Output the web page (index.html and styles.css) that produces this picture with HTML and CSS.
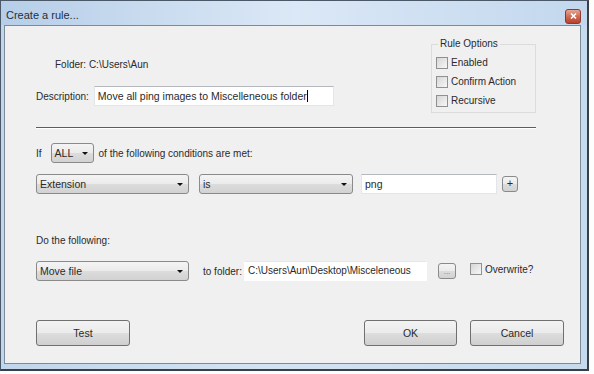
FILE: index.html
```html
<!DOCTYPE html>
<html>
<head>
    <title>Create a rule...</title>
    <link rel="stylesheet" href="styles.css">
</head>
<body>
    <div class="window">
        <div class="titlebar">
            <span class="title">Create a rule...</span>
            <span class="close-btn">
                <svg width="7" height="6" viewBox="0 0 7 6"><path d="M1 0.5 L6 5.5 M6 0.5 L1 5.5" stroke="#fff" stroke-width="1.6"/></svg>
            </span>
        </div>
        <div class="client">
            <div class="top">
                <div class="top-left">
                    <div class="folder-row">Folder: C:\Users\Aun</div>
                    <div class="desc-row">
                        <span class="label">Description:</span>
                        <div class="textbox desc-box">Move all ping images to Miscelleneous folder<span class="caret"></span></div>
                    </div>
                </div>
                <fieldset class="options">
                    <legend>Rule Options</legend>
                    <div class="check-row"><span class="checkbox"></span>Enabled</div>
                    <div class="check-row"><span class="checkbox"></span>Confirm Action</div>
                    <div class="check-row"><span class="checkbox"></span>Recursive</div>
                </fieldset>
            </div>

            <div class="separator"></div>

            <div class="if-row">
                <span class="label">If</span>
                <div class="combo all-combo">ALL<span class="arrow"></span></div>
                <span class="label met-label">of the following conditions are met:</span>
            </div>

            <div class="cond-row">
                <div class="combo wide-combo">Extension<span class="arrow"></span></div>
                <div class="combo is-combo">is<span class="arrow"></span></div>
                <div class="textbox ext-box">png</div>
                <div class="small-btn plus-btn">+</div>
            </div>

            <div class="do-label">Do the following:</div>

            <div class="action-row">
                <div class="combo wide-combo">Move file<span class="arrow"></span></div>
                <span class="label to-label">to folder:</span>
                <div class="textbox folder-box">C:\Users\Aun\Desktop\Misceleneous</div>
                <div class="small-btn browse-btn">...</div>
                <span class="checkbox overwrite-check"></span>
                <span class="label overwrite-label">Overwrite?</span>
            </div>

            <div class="button-row">
                <div class="button test-btn">Test</div>
                <div class="spacer"></div>
                <div class="button">OK</div>
                <div class="button cancel-btn">Cancel</div>
            </div>
        </div>
    </div>
</body>
</html>
```

FILE: styles.css
```css
body {
    margin: 0;
    padding: 0;
    background: #fdfdfd;
    font-family: 'Liberation Sans', Arial, sans-serif;
    font-size: 10px;
    color: #2a2a2a;
}
.window {
    width: 589px;
    height: 371px;
    box-sizing: border-box;
    border: 1px solid #4a5868;
    border-right: 2px solid #3a3f46;
    border-bottom: 2px solid #3a3f46;
    background: linear-gradient(to right, #c0d6ec, #d3e3f4 45%, #c6daee);
}
.titlebar {
    height: 24px;
    display: flex;
    align-items: center;
    justify-content: space-between;
    background: linear-gradient(to right, #b6cee8, #dbe8f6 50%, #c2d7ee);
}
.title {
    margin-left: 5px;
    font-size: 11px;
    color: #1d2f45;
    margin-top: 4px;
}
.close-btn {
    width: 14px;
    height: 13px;
    margin-right: 6px;
    margin-top: 6px;
    border: 1px solid #8a3a2e;
    border-radius: 3px;
    background: linear-gradient(#e8a593, #d06a54 50%, #b8412a);
    display: flex;
    align-items: center;
    justify-content: center;
}
.client {
    margin: 0 6px 0 3px;
    height: 339px;
    box-sizing: border-box;
    border: 1px solid #7d8a98;
    background: #f0f0f0;
    padding: 12px 0 0 31px;
}
.top {
    display: flex;
    height: 76px;
}
.top-left {
    width: 395px;
}
.folder-row {
    margin-top: 20px;
    padding-left: 19px;
    line-height: 13px;
}
.desc-row {
    display: flex;
    align-items: center;
    margin-top: 15px;
}
.textbox {
    height: 20px;
    box-sizing: border-box;
    background: #fff;
    border: 1px solid #e2e6ea;
    border-top-color: #b4b8be;
    padding-left: 3px;
    line-height: 18px;
    white-space: nowrap;
}
.desc-box {
    width: 240px;
    margin-left: 5px;
    font-size: 10.5px;
}
.caret {
    display: inline-block;
    width: 1px;
    height: 12px;
    background: #000;
    vertical-align: -2px;
}
.options {
    width: 105px;
    box-sizing: border-box;
    margin: 0;
    padding: 6px 0 4px 4px;
    border: 1px solid #dcdcdc;
    height: 75px;
}
.options legend {
    margin-left: 2px;
    padding: 0 2px;
    line-height: 12px;
}
.check-row {
    display: flex;
    align-items: center;
    height: 13px;
    margin-bottom: 6px;
}
.checkbox {
    width: 12px;
    height: 12px;
    box-sizing: border-box;
    border: 1px solid #8f9092;
    background: linear-gradient(135deg, #d6d6d6, #f7f7f7);
    margin-right: 3px;
    flex-shrink: 0;
}
.separator {
    margin-top: 13px;
    width: 500px;
    border-top: 1px solid #5e5e5e;
    border-bottom: 1px solid #fff;
}
.if-row {
    display: flex;
    align-items: center;
    margin-top: 14px;
    height: 20px;
}
.combo {
    position: relative;
    height: 20px;
    box-sizing: border-box;
    border: 1px solid #8a8a8a;
    border-radius: 3px;
    background: linear-gradient(#f4f4f4, #ebebeb 50%, #dcdcdc 51%, #d2d2d2);
    padding-left: 3px;
    line-height: 18px;
    font-size: 10.5px;
}
.arrow {
    position: absolute;
    right: 5px;
    top: 8px;
    border-left: 3px solid transparent;
    border-right: 3px solid transparent;
    border-top: 3px solid #111;
}
.all-combo {
    width: 43px;
    margin-left: 9px;
}
.met-label {
    margin-left: 5px;
}
.cond-row {
    display: flex;
    align-items: center;
    margin-top: 11px;
    height: 20px;
}
.wide-combo {
    width: 153px;
}
.is-combo {
    width: 154px;
    margin-left: 10px;
}
.ext-box {
    width: 136px;
    margin-left: 8px;
    font-size: 10.5px;
}
.small-btn {
    box-sizing: border-box;
    border: 1px solid #8a8a8a;
    border-radius: 3px;
    background: linear-gradient(#f4f4f4, #ebebeb 50%, #dcdcdc 51%, #d2d2d2);
    text-align: center;
}
.plus-btn {
    width: 16px;
    height: 16px;
    margin-left: 5px;
    line-height: 13px;
    font-size: 11px;
}
.do-label {
    margin-top: 40px;
    line-height: 13px;
}
.action-row {
    display: flex;
    align-items: center;
    margin-top: 14px;
    height: 20px;
}
.to-label {
    width: 38px;
    margin-left: 14px;
    white-space: nowrap;
}
.folder-box {
    width: 183px;
    margin-left: 3px;
    font-size: 10px;
    border-color: #fff;
    border-top-color: #e6e6e6;
}
.browse-btn {
    width: 18px;
    height: 16px;
    margin-left: 11px;
    line-height: 16px;
    font-size: 8px;
    color: #777;
}
.overwrite-check {
    margin-left: 14px;
    margin-top: -5px;
}
.overwrite-label {
    margin-top: -4px;
}
.button-row {
    display: flex;
    margin-top: 39px;
    width: 528px;
}
.spacer {
    flex: 1;
}
.button {
    width: 93px;
    height: 26px;
    box-sizing: border-box;
    border: 1px solid #707070;
    border-radius: 3px;
    background: linear-gradient(#f3f3f3, #ebebeb 50%, #dddddd 51%, #cfcfcf);
    text-align: center;
    line-height: 24px;
    font-size: 10.5px;
}
.test-btn {
    width: 94px;
}
.cancel-btn {
    width: 94px;
    margin-left: 13px;
}
```
